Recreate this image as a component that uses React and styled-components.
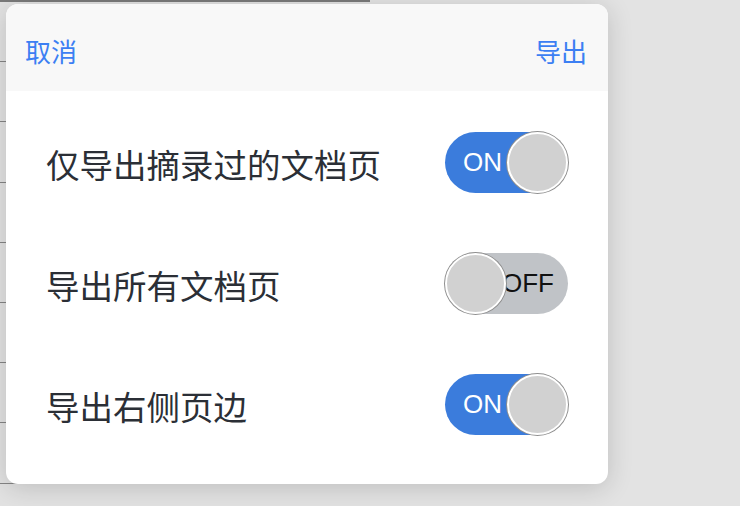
import styled, { createGlobalStyle } from "styled-components";

const GlobalStyle = createGlobalStyle`
  html, body {
    margin: 0;
    padding: 0;
    width: 740px;
    height: 506px;
    overflow: hidden;
    background: #e3e3e3;
    font-family: "Noto Sans CJK SC", "Noto Sans", sans-serif;
  }
`;

const Screen = styled.div`
  position: relative;
  width: 740px;
  height: 506px;
  overflow: hidden;
  display: grid;
  grid-template-columns: 370px 1fr;
`;

const DocColumn = styled.div`
  background: #e2e2e2;
  border-top: 2px solid #7a7a7a;
  display: flex;
  flex-direction: column;
  overflow: hidden;
  box-sizing: border-box;
`;

const DocLine = styled.div`
  height: 60.2px;
  flex-shrink: 0;
  border-bottom: 1.5px solid #858585;
  box-sizing: border-box;
`;

const SideColumn = styled.div`
  background: #e3e3e3;
`;

const Sheet = styled.div`
  position: absolute;
  left: 6px;
  top: 4px;
  width: 602px;
  height: 480px;
  background: #fff;
  border-radius: 12px;
  overflow: hidden;
  box-shadow: 0 4px 26px rgba(0, 0, 0, 0.16);
  display: flex;
  flex-direction: column;
`;

const Header = styled.div`
  height: 87px;
  flex-shrink: 0;
  background: #f8f8f8;
  display: flex;
  align-items: center;
  justify-content: space-between;
  padding: 6px 21px 0 19px;
  box-sizing: border-box;
`;

const HeaderButton = styled.button`
  border: none;
  background: none;
  padding: 0;
  font-family: "Noto Sans CJK SC", sans-serif;
  font-size: 26px;
  line-height: 1;
  color: #3c7ff3;
  cursor: pointer;
`;

const Body = styled.div`
  display: flex;
  flex-direction: column;
  padding: 11px 40px 0 40px;
`;

const Row = styled.div`
  height: 121px;
  display: flex;
  align-items: center;
  justify-content: space-between;
`;

const Label = styled.span`
  font-size: 33.5px;
  color: #2b2f36;
  line-height: 1;
  padding-top: 2px;
`;

const Track = styled.div`
  position: relative;
  width: 123px;
  height: 61px;
  border-radius: 31px;
  background: ${(p) => (p.$on ? "#3b7cdc" : "#c0c3c7")};
  display: flex;
  align-items: center;
  justify-content: ${(p) => (p.$on ? "flex-start" : "flex-end")};
  padding: ${(p) => (p.$on ? "0 0 0 18px" : "0 14px 0 0")};
  box-sizing: border-box;
  font-family: "Liberation Sans", Arial, sans-serif;
  font-size: 26px;
  color: ${(p) => (p.$on ? "#fff" : "#111")};
`;

const Knob = styled.div`
  position: absolute;
  top: 0;
  ${(p) => (p.$on ? "right: 0;" : "left: 0;")}
  width: 61px;
  height: 61px;
  border-radius: 50%;
  background: #d1d1d1;
  border: 2.5px solid #fff;
  box-shadow: 0 0 0 1px #8f8f8f;
  box-sizing: border-box;
`;

const Toggle = ({ on }) => (
  <Track $on={on}>
    {on ? "ON" : "OFF"}
    <Knob $on={on} />
  </Track>
);

const options = [
  { label: "仅导出摘录过的文档页", on: true },
  { label: "导出所有文档页", on: false },
  { label: "导出右侧页边", on: true },
];

export default function App() {
  return (
    <>
      <GlobalStyle />
      <Screen>
        <DocColumn>
          {Array.from({ length: 9 }).map((_, i) => (
            <DocLine key={i} />
          ))}
        </DocColumn>
        <SideColumn />
        <Sheet>
          <Header>
            <HeaderButton>取消</HeaderButton>
            <HeaderButton>导出</HeaderButton>
          </Header>
          <Body>
            {options.map((o) => (
              <Row key={o.label}>
                <Label>{o.label}</Label>
                <Toggle on={o.on} />
              </Row>
            ))}
          </Body>
        </Sheet>
      </Screen>
    </>
  );
}
